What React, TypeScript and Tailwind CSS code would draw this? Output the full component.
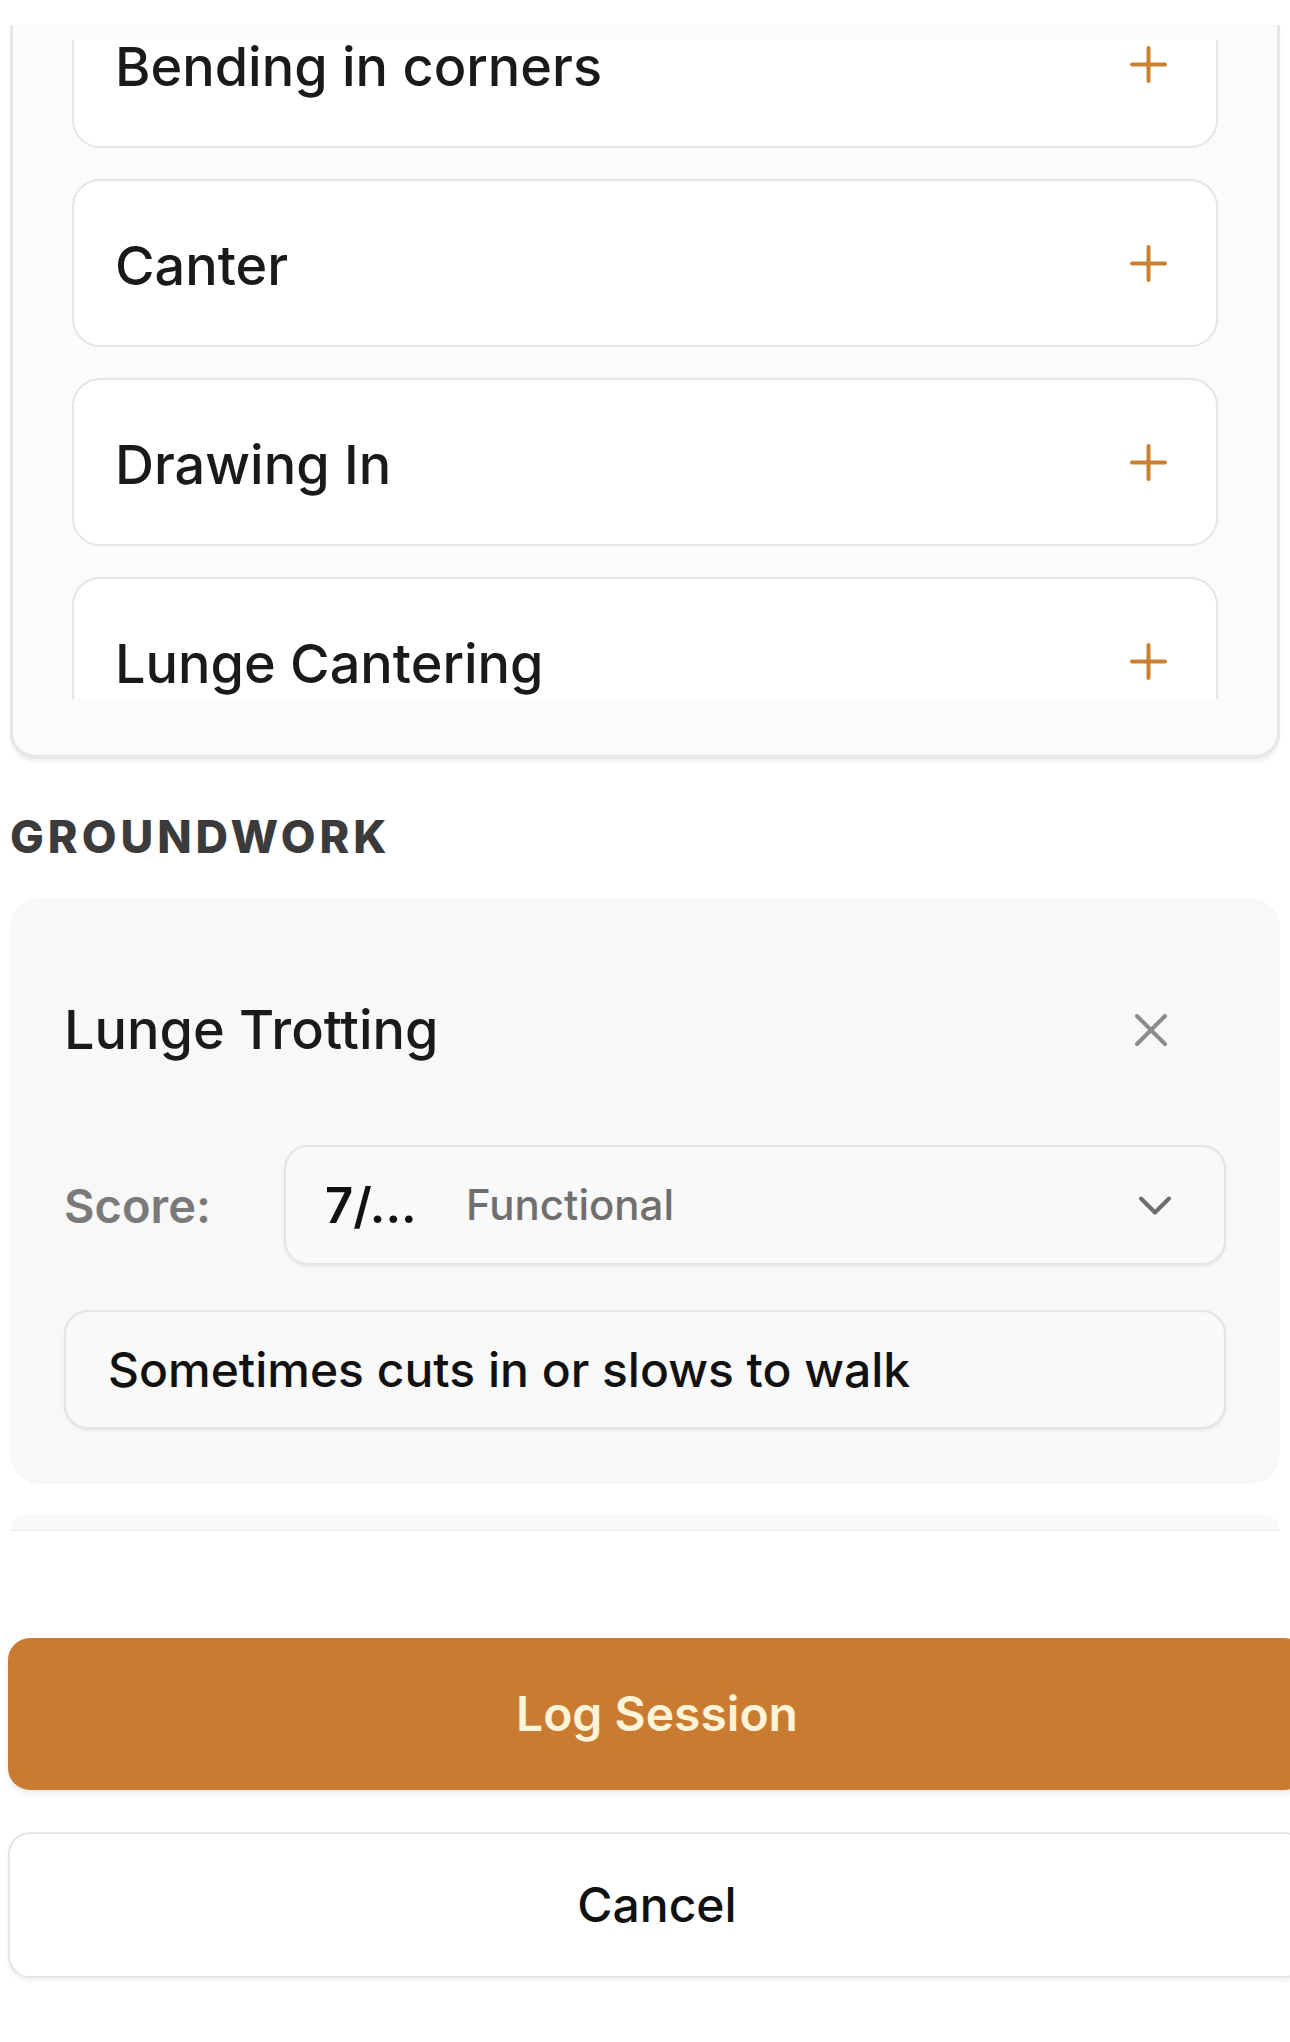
import React from "react"

// Exercises already offered in the ridden list (scrolled part-way)
const riddenItems = ["Bending in corners", "Canter", "Drawing In", "Lunge Cantering"]

function PlusIcon() {
  return (
    <svg width="37" height="37" viewBox="0 0 37 37" fill="none">
      <path d="M18.5 2v33M2 18.5h33" stroke="#c98131" strokeWidth="4" strokeLinecap="round" />
    </svg>
  )
}

function CloseIcon() {
  return (
    <svg width="32" height="32" viewBox="0 0 32 32" fill="none">
      <path d="M2 2l28 28M30 2L2 30" stroke="#8c8c8c" strokeWidth="4" strokeLinecap="round" />
    </svg>
  )
}

function ChevronIcon() {
  return (
    <svg width="32" height="19" viewBox="0 0 32 19" fill="none">
      <path d="M2 2.5l14 14 14-14" stroke="#6e6e6e" strokeWidth="4" strokeLinecap="round" strokeLinejoin="round" />
    </svg>
  )
}

function ExerciseOption({ name }: { name: string }) {
  return (
    <div className="flex h-[168px] shrink-0 items-center justify-between rounded-[28px] border-2 border-[#e5e5e5] bg-white pl-[41px] pr-[49px]">
      <span className="pt-[5px] text-[54px] font-medium leading-none text-[#1a1a1a]">{name}</span>
      <PlusIcon />
    </div>
  )
}

export default function App() {
  return (
    <div className="min-h-[2042px] w-[1290px] overflow-hidden bg-white font-['Inter','Noto_Sans',sans-serif]">
      <div className="h-[25px]" />

      {/* Ridden list card */}
      <div className="mx-[10px] rounded-b-[26px] border-x-[3px] border-b-[4px] border-[#e7e7e7] bg-[#fbfbfb] px-[59px] pb-[56px] pt-[15px] shadow-[0_4px_3px_rgba(0,0,0,0.05)]">
        <div className="h-[659px] overflow-hidden">
          <div className="-mt-[60px] flex flex-col gap-[31px]">
            {riddenItems.map((item) => (
              <ExerciseOption key={item} name={item} />
            ))}
          </div>
        </div>
      </div>

      <div className="ml-[10px] mt-[55px] text-[45px] font-extrabold uppercase leading-none tracking-[4px] text-[#3b3b3b]">
        Groundwork
      </div>

      {/* Selected exercise */}
      <div className="mx-[10px] mt-[39px] rounded-[30px] bg-[#f8f8f8] px-[54px] pb-[55px] pt-[107px]">
        <div className="flex h-[50px] items-center justify-between">
          <span className="text-[54px] font-medium leading-none text-[#1a1a1a]">Lunge Trotting</span>
          <span className="mr-[59px] flex">
            <CloseIcon />
          </span>
        </div>

        <div className="mt-[90px] flex items-center">
          <span className="w-[220px] text-[47px] font-semibold leading-none text-[#7a7a7a]">Score:</span>
          <div className="flex h-[120px] flex-1 items-center rounded-[24px] border-2 border-[#e4e4e4] bg-[#f9f9f9] pl-[39px] pr-[53px] shadow-[0_2px_3px_rgba(0,0,0,0.05)]">
            <span className="w-[141px] text-[49px] font-semibold leading-none text-[#111]">7/...</span>
            <span className="flex-1 text-[42px] font-medium leading-none text-[#6f6f6f]">Functional</span>
            <ChevronIcon />
          </div>
        </div>

        <div className="mt-[45px] flex h-[119px] items-center rounded-[24px] border-2 border-[#e4e4e4] bg-[#f9f9f9] pl-[42px] shadow-[0_2px_3px_rgba(0,0,0,0.05)]">
          <span className="text-[48px] font-medium leading-none text-[#111]">Sometimes cuts in or slows to walk</span>
        </div>
      </div>

      {/* Next exercise peeking below */}
      <div className="mx-[10px] mt-[30px] h-[17px] rounded-t-[30px] border-b border-[#efefef] bg-[#f9f9f9]" />

      <div className="ml-[8px] mt-[107px] flex w-[1298px] flex-col gap-[42px]">
        <button className="flex h-[152px] items-center justify-center rounded-[22px] bg-[#c97c31] text-[48px] font-semibold leading-none text-[#fff3d8] shadow-[0_4px_6px_rgba(0,0,0,0.08)]">
          Log Session
        </button>
        <button className="flex h-[146px] items-center justify-center rounded-[22px] border-2 border-[#e5e5e5] bg-white text-[48px] font-medium leading-none text-[#111] shadow-[0_3px_4px_rgba(0,0,0,0.06)]">
          Cancel
        </button>
      </div>
    </div>
  )
}
